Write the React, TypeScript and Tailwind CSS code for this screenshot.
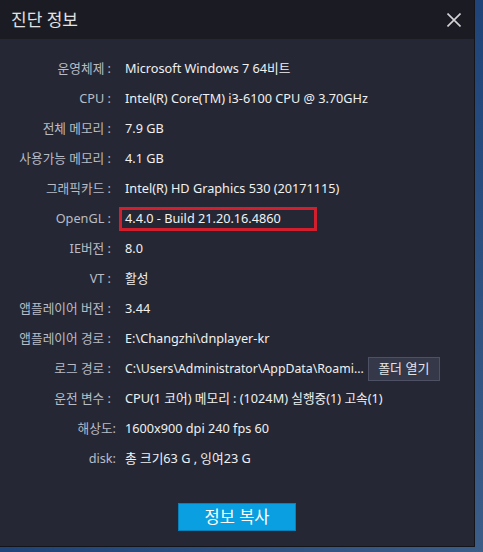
type Row = {
  label: string
  value: string
  spaced?: boolean
  highlight?: boolean
  folder?: boolean
}

const rows: Row[] = [
  { label: '운영체제', value: 'Microsoft Windows 7 64비트', spaced: true },
  { label: 'CPU', value: 'Intel(R) Core(TM) i3-6100 CPU @ 3.70GHz', spaced: true },
  { label: '전체 메모리', value: '7.9 GB', spaced: true },
  { label: '사용가능 메모리', value: '4.1 GB', spaced: true },
  { label: '그래픽카드', value: 'Intel(R) HD Graphics 530 (20171115)', spaced: true },
  { label: 'OpenGL', value: '4.4.0 - Build 21.20.16.4860', spaced: true, highlight: true },
  { label: 'IE버전', value: '8.0', spaced: true },
  { label: 'VT', value: '활성', spaced: true },
  { label: '앱플레이어 버전', value: '3.44', spaced: true },
  { label: '앱플레이어 경로', value: 'E:\\Changzhi\\dnplayer-kr', spaced: true },
  { label: '로그 경로', value: 'C:\\Users\\Administrator\\AppData\\Roami...', spaced: true, folder: true },
  { label: '운전 변수', value: 'CPU(1 코어) 메모리 : (1024M) 실행중(1) 고속(1)', spaced: true },
  { label: '해상도', value: '1600x900 dpi 240 fps 60' },
  { label: 'disk', value: '총 크기63 G , 잉여23 G' },
]

const font = { fontFamily: '"Noto Sans", "Noto Sans CJK KR", sans-serif' }

export default function App() {
  return (
    <div
      className="w-[483px] h-[552px] overflow-hidden bg-gradient-to-br from-[#173260] via-[#1f4479] to-[#3b5d88]"
      style={font}
    >
      <div className="w-[475px] h-[547px] flex flex-col bg-[#252834] border-r border-b border-[#14151b]">
        {/* Title bar */}
        <div className="h-[39px] flex items-center justify-between bg-[#1b1c23] pl-[11px] pr-[13px]">
          <span className="text-[17px] text-[#e2e2e4]">진단 정보</span>
          <svg width="14" height="14" viewBox="0 0 14 14" className="text-[#d4d4d8]">
            <path d="M0.5 0.5 L13.5 13.5 M13.5 0.5 L0.5 13.5" stroke="currentColor" strokeWidth="1.6" />
          </svg>
        </div>

        {/* Info rows */}
        <div className="pt-[15px] flex flex-col">
          {rows.map(r => (
            <div key={r.label} className="h-[30px] flex items-center text-[12.7px]">
              <div
                className={
                  r.spaced
                    ? 'w-[111px] text-right text-[#b9bcc6]'
                    : 'w-[116px] text-right text-[#b9bcc6]'
                }
              >
                {r.spaced ? `${r.label} :` : `${r.label}:`}
              </div>
              <div className={r.spaced ? 'ml-[14px]' : 'ml-[9px]'}>
                {r.highlight ? (
                  <div className="-ml-[6px] w-[198px] h-[24px] flex items-center border-[3px] border-[#d21f2e] pl-[3px] text-[#f2f2f2]">
                    {r.value}
                  </div>
                ) : (
                  <div className="flex items-center text-[#f0f0f0] whitespace-nowrap">
                    <span className={r.folder ? 'text-[12.3px]' : ''}>{r.value}</span>
                    {r.folder && (
                      <button
                        type="button"
                        className="ml-[4px] w-[72px] h-[24px] bg-[#343849] border border-[#4d5163] text-[13px] text-[#e4e4e6]"
                      >
                        폴더 열기
                      </button>
                    )}
                  </div>
                )}
              </div>
            </div>
          ))}
        </div>

        {/* Copy button */}
        <div className="flex justify-center mt-[29px]">
          <button
            type="button"
            className="w-[118px] h-[28px] bg-[#0a9fe0] border border-[#0a7fb8] text-[16.5px] text-white"
          >
            정보 복사
          </button>
        </div>
      </div>
    </div>
  )
}
